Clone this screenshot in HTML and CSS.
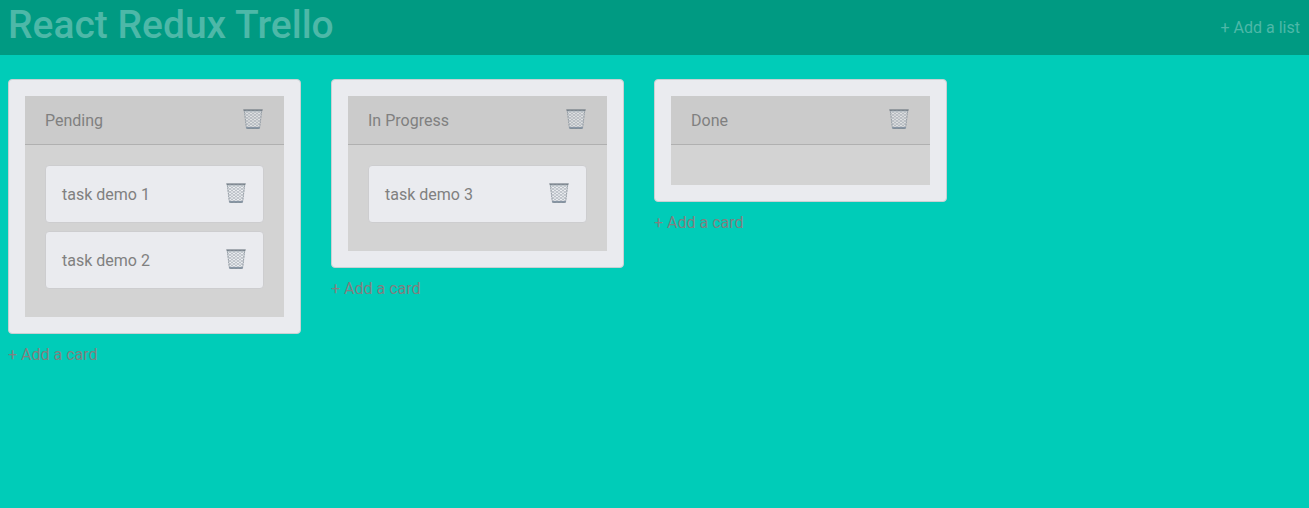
FILE: index.html
```html
<!DOCTYPE html>
<html lang="en">
<head>
<meta charset="utf-8">
<meta name="viewport" content="width=device-width, initial-scale=1">
<title>React Redux Trello</title>
<link rel="stylesheet" href="styles.css">
</head>
<body>
<svg class="sprite" aria-hidden="true">
  <defs>
    <pattern id="mesh" width="4" height="3" patternUnits="userSpaceOnUse">
      <path d="M0 0L4 3M0 3L4 0" stroke="#99a0a7" stroke-width=".6" fill="none"/>
    </pattern>
    <symbol id="trash" viewBox="0 0 20 20">
      <path d="M1 1H19L16.800 19.500H3.200Z" fill="#eef1f3" fill-opacity=".6"/>
      <path d="M1 1H19L16.800 19.500H3.200Z" fill="url(#mesh)"/>
      <path d="M1.300 2L3.300 18.500M18.700 2L16.700 18.500" stroke="#89929b" stroke-width=".8" stroke-dasharray="2 .6" fill="none"/>
      <path d="M.2 .5H19.800L19.300 1.800H.7Z" fill="#5d6873"/>
      <path d="M1.500 2.300H18.500" stroke="#b4bcc4" stroke-width=".8"/>
      <path d="M3 18H17L16.800 19.500H3.200Z" fill="#8795a4"/>
      <path d="M3.500 19.500H16.500" stroke="#5d6c7b" stroke-width=".5"/>
    </symbol>
  </defs>
</svg>
<header class="topbar">
  <h1 class="title">React Redux Trello</h1>
  <button class="link add-list" type="button">+ Add a list</button>
</header>
<main class="board">
  <section class="column">
    <div class="list">
      <div class="list-header">
        <h2 class="list-name">Pending</h2>
        <button class="icon-button" type="button" aria-label="Delete list Pending"><svg class="icon"><use href="#trash"/></svg></button>
      </div>
      <div class="list-body">
        <article class="card"><span>task demo 1</span><button class="icon-button" type="button" aria-label="Delete task demo 1"><svg class="icon"><use href="#trash"/></svg></button></article>
        <article class="card"><span>task demo 2</span><button class="icon-button" type="button" aria-label="Delete task demo 2"><svg class="icon"><use href="#trash"/></svg></button></article>
      </div>
    </div>
    <button class="link add-card" type="button">+ Add a card</button>
  </section>
  <section class="column">
    <div class="list">
      <div class="list-header">
        <h2 class="list-name">In Progress</h2>
        <button class="icon-button" type="button" aria-label="Delete list In Progress"><svg class="icon"><use href="#trash"/></svg></button>
      </div>
      <div class="list-body">
        <article class="card"><span>task demo 3</span><button class="icon-button" type="button" aria-label="Delete task demo 3"><svg class="icon"><use href="#trash"/></svg></button></article>
      </div>
    </div>
    <button class="link add-card" type="button">+ Add a card</button>
  </section>
  <section class="column">
    <div class="list">
      <div class="list-header">
        <h2 class="list-name">Done</h2>
        <button class="icon-button" type="button" aria-label="Delete list Done"><svg class="icon"><use href="#trash"/></svg></button>
      </div>
      <div class="list-body"></div>
    </div>
    <button class="link add-card" type="button">+ Add a card</button>
  </section>
</main>
</body>
</html>
```
FILE: styles.css
```css
* {
  box-sizing: border-box;
}

body {
  margin: 0;
  background: #00ccb8;
  color: #808080;
  font: 400 16px/24px Roboto, "Liberation Sans", sans-serif;
}

.sprite {
  position: absolute;
  width: 0;
  height: 0;
}

.topbar {
  display: flex;
  align-items: center;
  justify-content: space-between;
  padding: 1px 9px 6px 8px;
  background: #009a82;
  color: #4db8a8;
}

.title {
  margin: 0;
  font: 500 39px/48px Roboto, "Liberation Sans", sans-serif;
}

.link,
.icon-button {
  padding: 0;
  border: 0;
  background: none;
  color: inherit;
  font: inherit;
  cursor: pointer;
}

.add-list {
  margin-top: 5px;
}

.board {
  display: grid;
  grid-template-columns: repeat(4, 1fr);
  align-items: start;
  padding: 24px 9px 24px 8px;
}

.column {
  padding-right: 30px;
}

.list {
  padding: 16px;
  border: 1px solid #c9d0d3;
  border-radius: 4px;
  background: #eaebef;
}

.list-header {
  display: flex;
  align-items: center;
  justify-content: space-between;
  padding: 13px 20px 11px;
  border-bottom: 1px solid #b0b0b0;
  background: #cbcbcb;
}

.list-name {
  margin: 0;
  font: inherit;
}

.list-body {
  padding: 20px;
  background: #d3d3d3;
}

.card {
  display: flex;
  align-items: center;
  justify-content: space-between;
  margin-bottom: 8px;
  padding: 17px 16px 15px;
  border: 1px solid #cdcdcf;
  border-radius: 4px;
  background: #eaebef;
}

.icon-button {
  display: flex;
  padding: 0 1px 4px 0;
}

.icon {
  width: 20px;
  height: 20px;
}

.add-card {
  margin-top: 9px;
}
```
